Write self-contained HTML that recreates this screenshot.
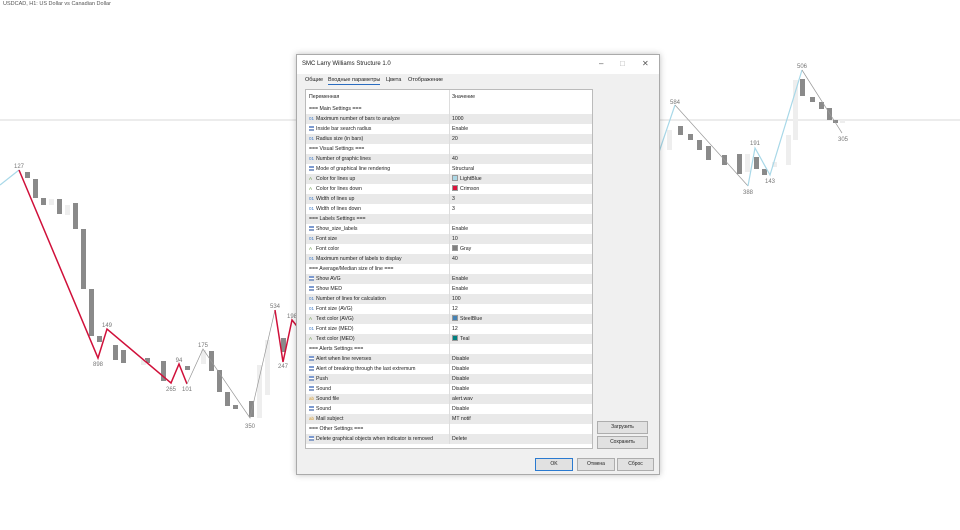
<!DOCTYPE html>
<html><head><meta charset="utf-8"><style>
*{margin:0;padding:0;box-sizing:border-box}
body{width:960px;height:530px;background:#fff;position:relative;overflow:hidden;font-family:"Liberation Sans","Noto Sans CJK JP",sans-serif}
.cap{position:absolute;left:3px;top:1px;font-size:5.5px;color:#555}
#dlg{position:absolute;left:296px;top:54px;width:364px;height:421px;background:#f0f0f0;border:1px solid #aaa;box-shadow:0 0 6px rgba(0,0,0,.25)}
.title{position:absolute;left:0;top:0;width:362px;height:19px;background:#fff;font-size:6px;color:#222;padding:6px 0 0 5px}
.ctl{position:absolute;top:4px;font-size:8px;color:#555}
.tabs{position:absolute;top:22px;left:8px;font-size:5.5px;color:#222}
.tabs span{position:absolute;white-space:nowrap}
#tbl{position:absolute;left:8px;top:34px;width:288px;height:360px;background:#fff;border:1px solid #bbb}
.r{position:absolute;left:0;width:286px;height:10px;font-size:5.2px;color:#222;line-height:10px;white-space:nowrap}
.r.g{background:#e9e9e9}
.r .a{position:absolute;left:3px}
.r .b{position:absolute;left:146px}
.r .sep{position:absolute;left:143px;top:0;width:1px;height:10px;background:#ddd}
.i{display:inline-block;width:7px;font-size:4.5px;color:#3a78c8}
.ie{display:inline-block;width:5px;height:5px;margin-right:2px;vertical-align:-0.5px;background:linear-gradient(#7c9ad0 0 40%,#fff 40% 60%,#8aa0c8 60%)}
.ic{color:#6a9a4a}.ia{color:#d79a2a}
.sw{display:inline-block;width:6px;height:6px;vertical-align:-1px;margin-right:2px;border:1px solid #999}
.btn{position:absolute;height:13px;background:#e1e1e1;border:1px solid #adadad;font-size:5px;color:#222;text-align:center;line-height:11px}
</style></head><body>
<div class="cap">USDCAD, H1: US Dollar vs Canadian Dollar</div>
<svg width="960" height="530" style="position:absolute;left:0;top:0">
<line x1="0" y1="120" x2="960" y2="120" stroke="#ccc" stroke-width="0.8"/>
<g fill="#8a8a8a">
<rect x="25" y="172" width="5" height="6"/><rect x="33" y="179" width="5" height="19"/><rect x="41" y="198" width="5" height="7"/><rect x="57" y="199" width="5" height="15"/><rect x="73" y="203" width="5" height="26"/><rect x="81" y="229" width="5" height="60"/><rect x="89" y="289" width="5" height="47"/><rect x="97" y="336" width="5" height="6"/><rect x="113" y="345" width="5" height="15"/><rect x="121" y="350" width="5" height="13"/><rect x="145" y="358" width="5" height="5"/><rect x="161" y="361" width="5" height="20"/><rect x="185" y="366" width="5" height="4"/><rect x="209" y="351" width="5" height="20"/><rect x="217" y="370" width="5" height="22"/><rect x="225" y="392" width="5" height="14"/><rect x="233" y="405" width="5" height="4"/><rect x="249" y="401" width="5" height="16"/><rect x="281" y="338" width="5" height="14"/>
<rect x="678" y="126" width="5" height="9"/><rect x="688" y="134" width="5" height="6"/><rect x="697" y="140" width="5" height="10"/><rect x="706" y="146" width="5" height="14"/><rect x="722" y="155" width="5" height="10"/><rect x="737" y="154" width="5" height="20"/><rect x="754" y="157" width="5" height="12"/><rect x="762" y="169" width="5" height="6"/><rect x="800" y="79" width="5" height="17"/><rect x="810" y="97" width="5" height="5"/><rect x="819" y="102" width="5" height="7"/><rect x="827" y="108" width="5" height="12"/><rect x="833" y="120" width="5" height="3"/>
</g>
<g fill="#eee">
<rect x="49" y="199" width="5" height="6"/><rect x="65" y="205" width="5" height="10"/><rect x="141" y="360" width="5" height="5"/><rect x="201" y="350" width="5" height="14"/><rect x="257" y="365" width="5" height="53"/><rect x="265" y="340" width="5" height="55"/><rect x="667" y="130" width="5" height="20"/><rect x="745" y="154" width="5" height="18"/><rect x="772" y="162" width="5" height="5"/><rect x="786" y="135" width="5" height="30"/><rect x="793" y="80" width="5" height="60"/><rect x="840" y="120" width="5" height="3"/>
</g>
<polyline points="0,185 19,170" fill="none" stroke="#a8d8e8" stroke-width="1.2"/>
<polyline points="19,170 98,358 107,329 171,383 179,364 187,384" fill="none" stroke="#d0103a" stroke-width="1.5"/>
<polyline points="187,384 203,349 250,418 275,310" fill="none" stroke="#999" stroke-width="0.7"/>
<polyline points="275,310 283,362 292,320 300,330" fill="none" stroke="#d0103a" stroke-width="1.5"/>
<polyline points="657,158 675,105" fill="none" stroke="#a8d8e8" stroke-width="1.2"/>
<polyline points="675,105 748,186" fill="none" stroke="#999" stroke-width="0.7"/>
<polyline points="748,186 755,148 770,175 802,70" fill="none" stroke="#a8d8e8" stroke-width="1.2"/>
<polyline points="802,70 842,133" fill="none" stroke="#999" stroke-width="0.7"/>
<g font-family="Liberation Sans" font-size="6" fill="#777" text-anchor="middle">
<text x="19" y="168">127</text><text x="98" y="366">898</text><text x="107" y="327">149</text><text x="171" y="391">265</text><text x="179" y="362">94</text><text x="187" y="391">101</text><text x="203" y="347">175</text><text x="250" y="428">350</text><text x="275" y="308">534</text><text x="283" y="368">247</text><text x="292" y="318">198</text>
<text x="675" y="104">584</text><text x="748" y="194">388</text><text x="755" y="145">191</text><text x="770" y="183">143</text><text x="802" y="68">506</text><text x="843" y="141">305</text>
</g>
</svg>
<div id="dlg">
<div class="title">SMC Larry Williams Structure 1.0</div>
<span class="ctl" style="left:302px">–</span><span class="ctl" style="left:323px;color:#aaa">□</span><span class="ctl" style="left:345px">✕</span>
<div class="tabs"><span style="left:0">Общие</span><span style="left:23px;border-bottom:1.5px solid #2a6cc0;padding-bottom:1px">Входные параметры</span><span style="left:81px">Цвета</span><span style="left:103px">Отображение</span></div>
<div id="tbl">
<div class="r" style="top:0;height:14px;line-height:14px"><span class="a">Переменная</span><span class="sep" style="height:14px"></span><span class="b">Значение</span></div>
<div class="r" style="top:14px"><span class="a">=== Main Settings ===</span><span class="sep"></span></div>
<div class="r g" style="top:24px"><span class="a"><span class="i">01</span>Maximum number of bars to analyze</span><span class="sep"></span><span class="b">1000</span></div>
<div class="r" style="top:34px"><span class="a"><span class="ie"></span>Inside bar search radius</span><span class="sep"></span><span class="b">Enable</span></div>
<div class="r g" style="top:44px"><span class="a"><span class="i">01</span>Radius size (in bars)</span><span class="sep"></span><span class="b">20</span></div>
<div class="r" style="top:54px"><span class="a">=== Visual Settings ===</span><span class="sep"></span></div>
<div class="r g" style="top:64px"><span class="a"><span class="i">01</span>Number of graphic lines</span><span class="sep"></span><span class="b">40</span></div>
<div class="r" style="top:74px"><span class="a"><span class="ie"></span>Mode of graphical line rendering</span><span class="sep"></span><span class="b">Structural</span></div>
<div class="r g" style="top:84px"><span class="a"><span class="i ic">A</span>Color for lines up</span><span class="sep"></span><span class="b"><span class="sw" style="background:#add8e6"></span>LightBlue</span></div>
<div class="r" style="top:94px"><span class="a"><span class="i ic">A</span>Color for lines down</span><span class="sep"></span><span class="b"><span class="sw" style="background:#dc143c"></span>Crimson</span></div>
<div class="r g" style="top:104px"><span class="a"><span class="i">01</span>Width of lines up</span><span class="sep"></span><span class="b">3</span></div>
<div class="r" style="top:114px"><span class="a"><span class="i">01</span>Width of lines down</span><span class="sep"></span><span class="b">3</span></div>
<div class="r g" style="top:124px"><span class="a">=== Labels Settings ===</span><span class="sep"></span></div>
<div class="r" style="top:134px"><span class="a"><span class="ie"></span>Show_size_labels</span><span class="sep"></span><span class="b">Enable</span></div>
<div class="r g" style="top:144px"><span class="a"><span class="i">01</span>Font size</span><span class="sep"></span><span class="b">10</span></div>
<div class="r" style="top:154px"><span class="a"><span class="i ic">A</span>Font color</span><span class="sep"></span><span class="b"><span class="sw" style="background:#808080"></span>Gray</span></div>
<div class="r g" style="top:164px"><span class="a"><span class="i">01</span>Maximum number of labels to display</span><span class="sep"></span><span class="b">40</span></div>
<div class="r" style="top:174px"><span class="a">=== Average/Median size of line ===</span><span class="sep"></span></div>
<div class="r g" style="top:184px"><span class="a"><span class="ie"></span>Show AVG</span><span class="sep"></span><span class="b">Enable</span></div>
<div class="r" style="top:194px"><span class="a"><span class="ie"></span>Show MED</span><span class="sep"></span><span class="b">Enable</span></div>
<div class="r g" style="top:204px"><span class="a"><span class="i">01</span>Number of lines for calculation</span><span class="sep"></span><span class="b">100</span></div>
<div class="r" style="top:214px"><span class="a"><span class="i">01</span>Font size (AVG)</span><span class="sep"></span><span class="b">12</span></div>
<div class="r g" style="top:224px"><span class="a"><span class="i ic">A</span>Text color (AVG)</span><span class="sep"></span><span class="b"><span class="sw" style="background:#4682b4"></span>SteelBlue</span></div>
<div class="r" style="top:234px"><span class="a"><span class="i">01</span>Font size (MED)</span><span class="sep"></span><span class="b">12</span></div>
<div class="r g" style="top:244px"><span class="a"><span class="i ic">A</span>Text color (MED)</span><span class="sep"></span><span class="b"><span class="sw" style="background:#008080"></span>Teal</span></div>
<div class="r" style="top:254px"><span class="a">=== Alerts Settings ===</span><span class="sep"></span></div>
<div class="r g" style="top:264px"><span class="a"><span class="ie"></span>Alert when line reverses</span><span class="sep"></span><span class="b">Disable</span></div>
<div class="r" style="top:274px"><span class="a"><span class="ie"></span>Alert of breaking through the last extremum</span><span class="sep"></span><span class="b">Disable</span></div>
<div class="r g" style="top:284px"><span class="a"><span class="ie"></span>Push</span><span class="sep"></span><span class="b">Disable</span></div>
<div class="r" style="top:294px"><span class="a"><span class="ie"></span>Sound</span><span class="sep"></span><span class="b">Disable</span></div>
<div class="r g" style="top:304px"><span class="a"><span class="i ia">ab</span>Sound file</span><span class="sep"></span><span class="b">alert.wav</span></div>
<div class="r" style="top:314px"><span class="a"><span class="ie"></span>Sound</span><span class="sep"></span><span class="b">Disable</span></div>
<div class="r g" style="top:324px"><span class="a"><span class="i ia">ab</span>Mail subject</span><span class="sep"></span><span class="b">MT notif</span></div>
<div class="r" style="top:334px"><span class="a">=== Other Settings ===</span><span class="sep"></span></div>
<div class="r g" style="top:344px"><span class="a"><span class="ie"></span>Delete graphical objects when indicator is removed</span><span class="sep"></span><span class="b">Delete</span></div>
</div>
<div class="btn" style="left:300px;top:366px;width:51px">Загрузить</div>
<div class="btn" style="left:300px;top:381px;width:51px">Сохранить</div>
<div class="btn" style="left:238px;top:403px;width:38px;border-color:#2a7ad0">OK</div>
<div class="btn" style="left:280px;top:403px;width:38px">Отмена</div>
<div class="btn" style="left:320px;top:403px;width:37px">Сброс</div>
</div>
</body></html>
